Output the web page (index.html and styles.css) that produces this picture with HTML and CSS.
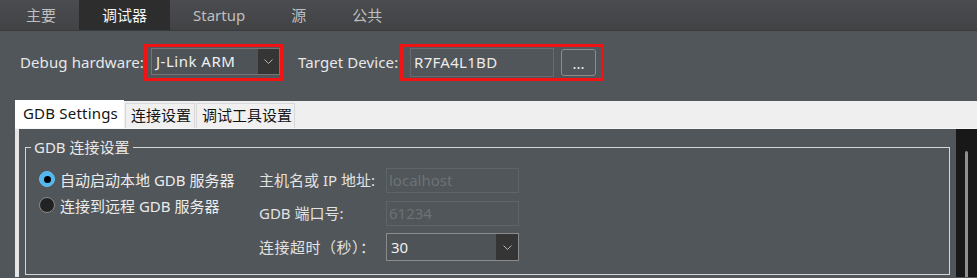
FILE: index.html
```html
<!DOCTYPE html>
<html>
<head>
<meta charset="utf-8">
<link rel="stylesheet" href="styles.css">
</head>
<body>
<div class="topbar">
  <div class="ttab">主要</div>
  <div class="ttab active">调试器</div>
  <div class="ttab">Startup</div>
  <div class="ttab">源</div>
  <div class="ttab">公共</div>
</div>
<div class="hwrow">
  <span class="lbl hwlbl">Debug hardware:</span>
  <div class="combo hwcombo">
    <span class="val">J-Link ARM</span>
    <span class="arrow"><svg width="9" height="5" viewBox="0 0 9 5"><polyline points="0.5,0.5 4.5,4.5 8.5,0.5" fill="none" stroke="#b4b4b4" stroke-width="1"/></svg></span>
  </div>
  <span class="lbl tgtlbl">Target Device:</span>
  <div class="tfield">R7FA4L1BD</div>
  <button class="dots">...</button>
  <div class="mark m1"></div>
  <div class="mark m2"></div>
</div>
<div class="inner">
  <div class="itabs">
    <div class="itab sel">GDB Settings</div>
    <div class="itab t2">连接设置</div>
    <div class="itab t3">调试工具设置</div>
  </div>
  <div class="pane">
    <div class="scrollarea">
      <fieldset class="group">
        <legend>GDB 连接设置</legend>
        <div class="gcontent">
          <div class="radios">
            <div class="rrow"><span class="radio on"></span>自动启动本地 GDB 服务器</div>
            <div class="rrow"><span class="radio"></span>连接到远程 GDB 服务器</div>
          </div>
          <div class="form">
            <span class="flbl r1">主机名或 IP 地址:</span>
            <div class="dfield r1">localhost</div>
            <span class="flbl r2">GDB 端口号:</span>
            <div class="dfield r2">61234</div>
            <span class="flbl r3">连接超时（秒）：</span>
            <div class="combo tcombo r3">
              <span class="val">30</span>
              <span class="arrow"><svg width="9" height="5" viewBox="0 0 9 5"><polyline points="0.5,0.5 4.5,4.5 8.5,0.5" fill="none" stroke="#b4b4b4" stroke-width="1"/></svg></span>
            </div>
          </div>
        </div>
      </fieldset>
    </div>
    <div class="vscroll"><div class="handle"></div></div>
  </div>
</div>
</body>
</html>
```
FILE: styles.css
```css
html, body {
  margin: 0;
  height: 278px;
  overflow: hidden;
}
body {
  background: #51565a;
  font-family: "Noto Sans", "Noto Sans CJK SC", sans-serif;
  font-size: 15px;
  color: #e6e6e6;
}
.topbar {
  height: 30px;
  display: flex;
  padding-left: 3px;
  background: linear-gradient(#4b4c50, #424345);
  border-bottom: 1px solid #393a3c;
}
.ttab {
  padding: 0 23px;
  line-height: 30px;
  color: #bfbfbf;
}
.ttab.active {
  background: #2d2d2d;
  color: #f4f4f4;
}
.hwrow {
  position: relative;
  height: 69px;
  box-sizing: border-box;
  padding: 17px 0 0 20px;
  display: flex;
  align-items: flex-start;
}
.lbl {
  line-height: 29px;
  white-space: nowrap;
  color: #e8e8e8;
  letter-spacing: 0.1px;
}
.hwlbl { width: 131px; }
.tgtlbl { width: 112px; margin-left: 18px; }
.combo {
  display: flex;
  box-sizing: border-box;
  border: 1px solid #747474;
  background: #4e5357;
}
.combo .val {
  flex: 1;
  padding-left: 4px;
  color: #f0f0f0;
}
.combo .arrow {
  background: #353535;
  display: flex;
  align-items: center;
  justify-content: center;
}
.hwcombo {
  width: 129px;
  height: 27px;
}
.hwcombo .val { line-height: 25px; letter-spacing: 0.5px; }
.hwcombo .arrow { width: 21px; }
.tfield {
  width: 144px;
  height: 29px;
  box-sizing: border-box;
  border: 1px solid #676b6e;
  padding-left: 3px;
  line-height: 27px;
  color: #ececec;
  letter-spacing: 0.3px;
}
.dots {
  width: 35px;
  height: 27px;
  margin: 1px 0 0 7px;
  box-sizing: border-box;
  border: 1px solid #8c8c8c;
  border-radius: 3px;
  background: transparent;
  color: #f0f0f0;
  font: inherit;
  line-height: 20px;
  padding: 0;
}
.mark {
  position: absolute;
  top: 13px;
  height: 37px;
  box-sizing: border-box;
  border: 3px solid #f21414;
}
.m1 { left: 144px; width: 139px; }
.m2 { left: 400px; width: 204px; }
.inner {
  margin: 1px 0 0 15px;
}
.itabs {
  height: 27px;
  display: flex;
  align-items: flex-end;
  background: #efefef;
}
.itab {
  height: 25px;
  box-sizing: border-box;
  border: 1px solid #d8d8d8;
  border-bottom: none;
  background: #f0f0f0;
  color: #141414;
  padding: 0 0 0 5px;
  line-height: 23px;
  margin-left: 1px;
  white-space: nowrap;
}
.itab.sel {
  height: 28px;
  width: 109px;
  border: none;
  background: #ffffff;
  padding-left: 8px;
  margin-left: 0;
  line-height: 26px;
  letter-spacing: 0.2px;
}
.t2 { width: 70px; }
.t3 { width: 99px; }
.pane {
  display: flex;
  height: 148px;
  border-top: 1px solid #f7f7f7;
}
.scrollarea {
  flex: 1;
  border-left: 4px solid #e6e6e6;
  overflow: hidden;
}
.vscroll {
  width: 21px;
  background: #181818;
  overflow: hidden;
}
.handle {
  margin: 22px 0 0 9px;
  width: 3px;
  height: 126px;
  background: #8f8f8f;
  border-radius: 2px 2px 0 0;
}
.group {
  margin: 8px 6px 0 6px;
  border: 1px solid #d6d6d6;
  padding: 0;
  min-width: 0;
}
.group legend {
  margin-left: 5px;
  padding: 0 3px;
  line-height: 20px;
  color: #e8e8e8;
}
.gcontent {
  display: flex;
  padding-left: 13px;
}
.radios {
  width: 220px;
  padding-top: 9px;
}
.rrow {
  height: 26px;
  display: flex;
  align-items: center;
  color: #ececec;
  white-space: nowrap;
}
.radio {
  width: 16px;
  height: 16px;
  box-sizing: border-box;
  border-radius: 50%;
  margin-right: 5px;
  background: #222222;
  border: 1px solid #8a8a8a;
  display: flex;
  align-items: center;
  justify-content: center;
}
.radio.on {
  background: #52b6f0;
  border: 1px solid #62bff3;
}
.radio.on::after {
  content: "";
  width: 7px;
  height: 7px;
  border-radius: 50%;
  background: #000;
}
.form {
  display: grid;
  grid-template-columns: 127px 133px;
  grid-template-rows: 25px 33px 35px;
  align-items: end;
  padding: 11px 0 13px 0;
}
.flbl {
  color: #e2e2e2;
  white-space: nowrap;
  line-height: 25px;
}
.flbl.r3 { line-height: 28px; letter-spacing: 0.5px; }
.dfield {
  height: 25px;
  box-sizing: border-box;
  border: 1px solid #5f6467;
  padding-left: 2px;
  line-height: 23px;
  color: #6d7275;
}
.tcombo {
  height: 28px;
  border-color: #8a8a8a;
}
.tcombo .val { line-height: 26px; }
.tcombo .arrow { width: 22px; }
```
